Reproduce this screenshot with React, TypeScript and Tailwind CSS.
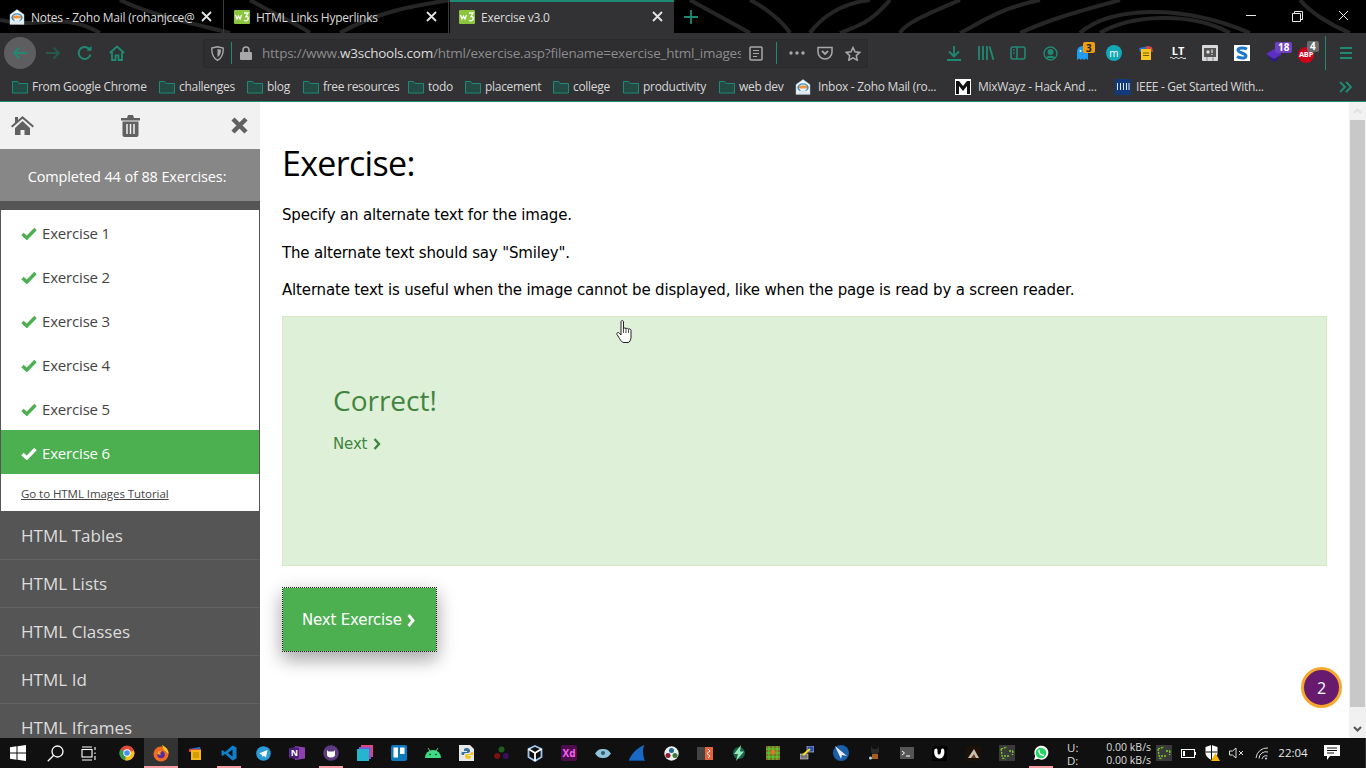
import React from "react";

const TEAL = "#1f8a74";
const UI = { fontFamily: '"Open Sans","Noto Sans",sans-serif' };
const VERD = { fontFamily: '"DejaVu Sans",Verdana,sans-serif' };

function W3() {
  return (
    <svg width="16" height="14" viewBox="0 0 16 14" className="shrink-0">
      <rect width="16" height="14" rx="1" fill="#8cc63f" />
      <path d="M1.500 5l1.500 4 1.500-3 1.500 3 1.500-4" stroke="#fff" strokeWidth="1.200" fill="none" />
      <path d="M10 3h4l-2 3.500c2 0 2.300 1 2.300 2 0 2-2.800 3-4.300 1.700" stroke="#fff" strokeWidth="1.300" fill="none" />
    </svg>
  );
}
function Zoho({ size = 16 }: { size?: number }) {
  return (
    <svg width={size} height={size} viewBox="0 0 16 16" className="shrink-0">
      <path d="M8 .5l7 5v10H1v-10z" fill="#f4f6f8" stroke="#9fb4c4" strokeWidth=".5" />
      <path d="M3 6.500h10v3H3z" fill="#f28c28" opacity=".9" />
      <ellipse cx="8" cy="8.500" rx="5" ry="3.600" fill="none" stroke="#2b8fd0" strokeWidth="1.400" />
      <path d="M1 15l5-4h4l5 4z" fill="#dfe8ee" />
    </svg>
  );
}
function X({ size = 11, color = "#e4e4e4", w = 1.800 }: { size?: number; color?: string; w?: number }) {
  return (
    <svg width={size} height={size} viewBox="0 0 11 11"><path d="M1 1l9 9M10 1l-9 9" stroke={color} strokeWidth={w} /></svg>
  );
}
function Tab({ active, icon, title }: { active?: boolean; icon: React.ReactNode; title: string }) {
  return (
    <div className={active ? "relative flex h-[33px] w-[224px] items-center bg-[#323234] pl-[9px] pr-[11px]" : "relative flex h-[33px] w-[224px] items-center border-r border-[#3a3a3a] pl-[9px] pr-[11px]"}>
      {active && <div className="absolute inset-x-0 top-0 h-[2px] bg-[#1f8a74]" />}
      {icon}
      <span className="ml-[6px] w-[165px] overflow-hidden whitespace-nowrap pt-[2px] text-[12px] tracking-[-0.02em] text-[#dcdcdc]">{title}</span>
      <span className="ml-auto"><X /></span>
    </div>
  );
}
function Folder() {
  return (
    <svg width="16" height="14" viewBox="0 0 16 14" className="shrink-0">
      <path d="M.5 13V1.500h5l1.500 2h8.500V13z" fill="#234a44" stroke="#1f8a74" />
    </svg>
  );
}
function Arrow({ dir, color }: { dir: "l" | "r"; color: string }) {
  return (
    <svg width="16" height="14" viewBox="0 0 16 14">
      {dir === "l" ? <path d="M15 7H2M7.500 1.500L2 7l5.500 5.500" stroke={color} strokeWidth="1.800" fill="none" /> : <path d="M1 7h13M8.500 1.500L14 7l-5.500 5.500" stroke={color} strokeWidth="1.800" fill="none" />}
    </svg>
  );
}

const bookmarks: { label: string; cls: string; text?: string; icon?: React.ReactNode }[] = [
  { label: "From Google Chrome", cls: "w-[147px]" },
  { label: "challenges", cls: "w-[88px]" },
  { label: "blog", cls: "w-[56px]" },
  { label: "free resources", cls: "w-[105px]" },
  { label: "todo", cls: "w-[57px]" },
  { label: "placement", cls: "w-[88px]" },
  { label: "college", cls: "w-[70px]" },
  { label: "productivity", cls: "w-[96px]" },
  { label: "web dev", cls: "w-[76px]" },
  { label: "Inbox - Zoho Mail (ro...", cls: "w-[160px]", text: "ml-[3px]", icon: <Zoho /> },
  {
    label: "MixWayz - Hack And ...", cls: "w-[160px]", text: "ml-[3px]", icon: (
      <svg width="16" height="16" viewBox="0 0 16 16" className="shrink-0"><rect width="16" height="16" fill="#fff" /><path d="M1 2h3l4 5 4-5h3v13h-3V7L8 12 4 7v8H1z" fill="#111" /></svg>
    )
  },
  {
    label: "IEEE - Get Started With...", cls: "w-[160px]", text: "ml-[1px]", icon: (
      <svg width="16" height="16" viewBox="0 0 16 16" className="shrink-0"><rect width="16" height="16" fill="#123a7a" /><path d="M2.500 4v7M5.500 4v7M8.500 4v7M11.500 4v7M14 4v7" stroke="#dfe8ff" strokeWidth="1" /></svg>
    )
  },
];

function Slot({ cls, children }: { cls: string; children: React.ReactNode }) {
  return <div className={`relative flex shrink-0 items-center justify-center ${cls}`}>{children}</div>;
}
function Badge({ text, cls }: { text: string; cls: string }) {
  return <span className={`absolute -top-[3px] left-[17px] flex h-[11px] items-center justify-center rounded-[2px] px-[3px] text-[10px] font-bold leading-none ${cls}`}>{text}</span>;
}

function TitleBar() {
  return (
    <div className="relative flex h-[33px] shrink-0 items-center bg-black">
      <svg className="absolute inset-0" width="1366" height="33" viewBox="0 0 1366 33" fill="none" stroke="#262626" strokeWidth="4">
        <path d="M0 20C40 30 60 10 100 33M120 0C150 15 200 25 230 33M250 0c20 12 50 25 60 33M340 33C380 10 420 5 450 0" />
        <path d="M690 0l60 33M750 0c20 10 35 25 40 33M810 33c10-14 30-30 60-33M840 33c20-8 30-10 50-33M900 33c5-10 30-20 60-33" />
        <path d="M960 33c20-10 40-25 80-33M1020 33c30-14 60-22 100-33M1080 33c30-26 100-30 170 0M1100 33c30-18 90-22 130 0M1300 0c10 12 30 25 50 33" />
      </svg>
      <div className="relative flex">
        <Tab icon={<Zoho />} title="Notes - Zoho Mail (rohanjcce@" />
        <div className="w-px" />
        <Tab icon={<W3 />} title="HTML Links Hyperlinks" />
        <div className="w-px" />
        <Tab active icon={<W3 />} title="Exercise v3.0" />
      </div>
      <svg width="14" height="14" viewBox="0 0 14 14" className="relative ml-[10px]"><path d="M7 0v14M0 7h14" stroke={TEAL} strokeWidth="1.800" /></svg>
      <div className="relative ml-auto flex h-full items-start pt-[10px]">
        <div className="flex w-[46px] justify-center pt-[5px]"><div className="h-px w-[10px] bg-[#e8e8e8]" /></div>
        <div className="flex w-[46px] justify-center">
          <svg width="11" height="11" viewBox="0 0 11 11" className="mt-[1px]" fill="none" stroke="#e8e8e8"><path d="M.5 2.500h8v8h-8zM2.500 2.500v-2h8v8h-2" /></svg>
        </div>
        <div className="flex w-[46px] justify-center">
          <X size={11} color="#e8e8e8" w={1} />
        </div>
      </div>
    </div>
  );
}

function NavBar() {
  return (
    <div className="flex h-[37px] shrink-0 items-center bg-[#323234] pt-[3px]">
      <div className="ml-[4px] flex h-[32px] w-[32px] items-center justify-center rounded-full bg-[#5e5e60]"><Arrow dir="l" color={TEAL} /></div>
      <Slot cls="ml-[1px] w-[32px]"><Arrow dir="r" color="#23594f" /></Slot>
      <Slot cls="w-[32px]">
        <svg width="16" height="16" viewBox="0 0 16 16" fill="none" stroke={TEAL} strokeWidth="2"><path d="M13.500 9.500A6 6 0 1 1 12 3.800" /><path d="M14.500.8v5h-5z" fill={TEAL} stroke="none" /></svg>
      </Slot>
      <Slot cls="w-[32px]">
        <svg width="16" height="16" viewBox="0 0 16 16" fill="none" stroke={TEAL} strokeWidth="1.800"><path d="M.8 8L8 1.500 15.200 8M3 7v8h3.500v-4.500h3V15H13V7" /></svg>
      </Slot>
      <div className="ml-[70px] flex h-[29px] w-[665px] items-center rounded-[2px] border border-[#2a2a2b] bg-[#2e2e30]">
        <Slot cls="w-[27px]">
          <svg width="13" height="15" viewBox="0 0 13 15"><path d="M.8 2L6.500.7 12.200 2c.3 6-1.500 10-5.700 12.300C2.300 12 .5 8 .8 2z" fill="none" stroke="#a8a8a8" strokeWidth="1.400" /><path d="M6.500 3L10 3.800c0 3.500-1 5.800-3.500 7.400z" fill="#a8a8a8" /></svg>
        </Slot>
        <div className="h-[22px] w-px bg-[#1f8a74]" />
        <Slot cls="ml-[6px] w-[16px]">
          <svg width="12" height="14" viewBox="0 0 12 14"><rect y="6" width="12" height="8" rx="1" fill="#a8a8a8" /><path d="M3 6.500V4a3 3 0 0 1 6 0v2.500" fill="none" stroke="#a8a8a8" strokeWidth="1.600" /></svg>
        </Slot>
        <div style={UI} className="ml-[8px] w-[484px] overflow-hidden whitespace-nowrap text-[13.500px] tracking-[-0.018em] text-[#8c8c8c]">
          https://www.<span className="text-[#dcdcdc]">w3schools.com</span>/html/exercise.asp?filename=exercise_html_images6
        </div>
        <Slot cls="ml-[5px] w-[20px]">
          <svg width="14" height="15" viewBox="0 0 14 15" fill="none" stroke="#a8a8a8"><rect x="1" y="1" width="12" height="13" rx="1" strokeWidth="1.500" /><path d="M4 4.500h6M4 7.500h6M4 10.500h4" /></svg>
        </Slot>
        <div className="ml-[10px] h-[22px] w-px bg-[#1f8a74]" />
        <Slot cls="ml-[8px] w-[24px]">
          <svg width="16" height="4" viewBox="0 0 16 4" fill="#a8a8a8"><circle cx="2" cy="2" r="1.700" /><circle cx="8" cy="2" r="1.700" /><circle cx="14" cy="2" r="1.700" /></svg>
        </Slot>
        <Slot cls="ml-[2px] w-[28px]">
          <svg width="16" height="14" viewBox="0 0 16 14" fill="none" stroke="#a8a8a8" strokeWidth="1.500"><path d="M1 1.500h14V6a7 7 0 0 1-14 0z" /><path d="M5 5l3 3 3-3" strokeWidth="1.800" /></svg>
        </Slot>
        <Slot cls="w-[28px]">
          <svg width="16" height="15" viewBox="0 0 16 15" fill="none" stroke="#a8a8a8" strokeWidth="1.500"><path d="M8 1.500l2 4.300 4.700.6-3.400 3.200.9 4.600L8 11.900l-4.200 2.300.9-4.600L1.300 6.400 6 5.800z" /></svg>
        </Slot>
      </div>
      <div className="ml-[70px] flex items-center">
        <Slot cls="w-[32px]">
          <svg width="14" height="15" viewBox="0 0 14 15" fill="none" stroke={TEAL} strokeWidth="1.800"><path d="M7 0v10M2 5.500L7 10.500l5-5M0 14h14" /></svg>
        </Slot>
        <Slot cls="w-[32px]">
          <svg width="16" height="14" viewBox="0 0 16 14" fill="none" stroke={TEAL} strokeWidth="1.800"><path d="M1 0v14M5 0v14M9 0v14M11.500 .5l4 13.500" /></svg>
        </Slot>
        <Slot cls="w-[32px]">
          <svg width="16" height="14" viewBox="0 0 16 14" fill="none" stroke={TEAL} strokeWidth="1.600"><rect x="1" y="1" width="14" height="12" rx="2" /><path d="M7 1v12" /><path d="M3 4h2M3 7h2" strokeWidth="1.200" /></svg>
        </Slot>
        <Slot cls="w-[32px]">
          <svg width="15" height="15" viewBox="0 0 15 15" fill="none" stroke={TEAL} strokeWidth="1.400"><circle cx="7.500" cy="7.500" r="6.500" /><circle cx="7.500" cy="6" r="2.300" fill={TEAL} /><path d="M3.500 12c1-2.200 7-2.200 8 0" fill={TEAL} /></svg>
        </Slot>
        <Slot cls="w-[32px]">
          <svg width="13" height="16" viewBox="0 0 13 16"><path d="M1 15V6.500a5.500 5.500 0 0 1 11 0V15l-2-1.500-2 1.500-1.500-1.500L5 15l-2-1.500z" fill="#1f9cf0" /><circle cx="4.500" cy="6" r="1" fill="#fff" /><circle cx="8.500" cy="6" r="1" fill="#fff" /></svg>
          <Badge text="3" cls="bg-[#f29d0c] text-[#222]" />
        </Slot>
        <Slot cls="w-[32px]">
          <div style={UI} className="flex h-[16px] w-[16px] items-center justify-center rounded-full bg-[#12a8b5] pb-[1px] text-[10px] leading-none text-white">m</div>
        </Slot>
        <Slot cls="w-[32px]">
          <svg width="16" height="16" viewBox="0 0 16 16"><path d="M1 3l11-2 1 4-11 2z" fill="#2b6fd6" /><path d="M8 1l6 1 1 5-7-1z" fill="#d9453b" /><rect x="3" y="4" width="10" height="11" fill="#f9c623" /><path d="M5 8h6M5 10.500h6" stroke="#7a5a00" /></svg>
        </Slot>
        <Slot cls="w-[32px]">
          <div className="relative flex h-[16px] w-[16px] flex-col items-center text-white">
            <span style={UI} className="text-[11px] font-bold leading-[11px]">LT</span>
            <svg width="16" height="4" viewBox="0 0 16 4" fill="none" stroke="#fff"><path d="M0 2c2-2 3 2 5 0s3 2 5 0 3 2 6 0" /></svg>
          </div>
        </Slot>
        <Slot cls="w-[32px]">
          <svg width="16" height="16" viewBox="0 0 16 16"><rect width="16" height="16" rx="1" fill="#d8d8d8" /><rect x="2" y="3" width="12" height="9" fill="#555" /><path d="M5 12v4M11 12v4" stroke="#888" /><circle cx="6" cy="7" r="1.700" fill="#ddd" /><path d="M10 4.500v3.500M10 9v1" stroke="#ddd" strokeWidth="1.300" /></svg>
        </Slot>
        <Slot cls="w-[32px]">
          <svg width="16" height="16" viewBox="0 0 16 16"><rect width="16" height="16" fill="#fff" /><path d="M13 4c-2-1-9-2-9 1s8 3 8 6-7 2-9 .5" stroke="#1d77c9" strokeWidth="3" fill="none" /></svg>
        </Slot>
        <Slot cls="w-[32px]">
          <svg width="16" height="13" viewBox="0 0 16 13" className="mt-[4px]"><path d="M8 0l8 5-8 5-8-5z" fill="#5a2fc2" /><path d="M0 7l8 6 8-6-8 3z" fill="#2a1a8c" /></svg>
          <Badge text="18" cls="bg-[#6f42c1] text-white" />
        </Slot>
        <Slot cls="w-[32px]">
          <div style={UI} className="mt-[3px] flex h-[16px] w-[16px] items-center justify-center rounded-full bg-[#d0021b] text-[7.500px] font-bold tracking-[-0.03em] text-white">ABP</div>
          <Badge text="4" cls="bg-[#6b6b6b] text-white" />
        </Slot>
        <div className="ml-[3px] h-[34px] w-px bg-[#1f8a74]" />
        <Slot cls="ml-[4px] w-[32px]">
          <svg width="12" height="12" viewBox="0 0 12 12" stroke={TEAL} strokeWidth="1.800"><path d="M0 1h12M0 6h12M0 11h12" /></svg>
        </Slot>
      </div>
    </div>
  );
}

function BookmarksBar() {
  return (
    <div style={UI} className="flex h-[32px] shrink-0 items-center border-b-[1px] border-[#1f8a74] bg-[#323234] pl-[12px] pt-[2px] text-[12px] tracking-[-0.025em] text-[#d8d8d8]">
      {bookmarks.map((b) => (
        <div key={b.label} className={`flex shrink-0 items-center gap-[4px] whitespace-nowrap ${b.cls}`}>
          {b.icon ?? <Folder />}
          <span className={b.text ?? ""}>{b.label}</span>
        </div>
      ))}
      <svg width="14" height="12" viewBox="0 0 14 12" fill="none" stroke={TEAL} strokeWidth="2" className="ml-auto mr-[13px]"><path d="M1 1l5 5-5 5M7 1l5 5-5 5" /></svg>
    </div>
  );
}

function Check({ color }: { color: string }) {
  return (
    <svg width="16" height="13" viewBox="0 0 16 13"><path d="M1.500 7L5.800 11 14.500 2" stroke={color} strokeWidth="3.400" fill="none" /></svg>
  );
}

function Sidebar() {
  return (
    <aside style={UI} className="flex w-[260px] shrink-0 flex-col overflow-hidden bg-[#555555]">
      <div className="flex h-[47px] shrink-0 items-center justify-between bg-[#f1f1f1] pl-[11px] pr-[12px]">
        <svg width="23" height="19" viewBox="0 0 23 19" fill="#616161"><path d="M11.500 0L23 10l-1.300 1.400L11.500 2.800 1.300 11.400 0 10l4-3.500V1h3v3z" /><path d="M4 12l7.500-7 7.500 7v7h-5.500v-5h-4v5H4z" /></svg>
        <svg width="19" height="22" viewBox="0 0 19 22" fill="#616161" className="mr-[5px]"><path d="M0 3h6l1-3h5l1 3h6v2.500H0zM1.500 6.500h16V20a2 2 0 0 1-2 2h-12a2 2 0 0 1-2-2z" /><path d="M6 9v10M9.500 9v10M13 9v10" stroke="#f1f1f1" strokeWidth="1.500" /></svg>
        <svg width="17" height="17" viewBox="0 0 17 17"><path d="M2 2l13 13M15 2L2 15" stroke="#616161" strokeWidth="4.500" /></svg>
      </div>
      <div className="flex h-[52px] shrink-0 items-center justify-center bg-[#878787] pr-[6px] pt-[4px] text-[14.500px] tracking-[-0.008em] text-white">Completed 44 of 88 Exercises:</div>
      <div className="mt-[9px] flex shrink-0 flex-col border-b border-x border-[#555555] bg-white">
        {[1, 2, 3, 4, 5, 6].map((n) => (
          <div key={n} className={n === 6 ? "flex h-[44px] items-center gap-[5px] bg-[#4caf50] pl-[20px] pt-[2px] text-[15px] tracking-[-0.012em] text-white" : "flex h-[44px] items-center gap-[5px] pl-[20px] pt-[2px] text-[15px] tracking-[-0.012em] text-[#444444]"}>
            <Check color={n === 6 ? "#ffffff" : "#4caf50"} />
            Exercise {n}
          </div>
        ))}
        <div className="flex h-[37px] items-center pl-[20px] pt-[3px] text-[11.500px] tracking-[-0.005em] text-[#444444] underline">Go to HTML Images Tutorial</div>
      </div>
      {["HTML Tables", "HTML Lists", "HTML Classes", "HTML Id", "HTML Iframes"].map((t) => (
        <div key={t} className="flex h-[48px] shrink-0 items-center border-b border-[#626262] pl-[21px] text-[17px] tracking-[0.002em] text-[#dddddd]">{t}</div>
      ))}
    </aside>
  );
}

function Main() {
  return (
    <main className="relative min-w-0 flex-1 overflow-hidden bg-white pl-[22px] pr-[22px] text-[15px] text-black">
      <h1 style={UI} className="mt-[37px] text-[34px] font-normal leading-[48px] tracking-[-0.02em]">Exercise:</h1>
      <div style={VERD} className="tracking-[-0.011em]">
        <p className="mt-[17px] leading-[22px]">Specify an alternate text for the image.</p>
        <p className="mt-[15.500px] leading-[22px]">The alternate text should say "Smiley".</p>
        <p className="mt-[15.500px] leading-[22px]">Alternate text is useful when the image cannot be displayed, like when the page is read by a screen reader.</p>
      </div>
      <section className="mt-[15px] flex h-[250px] flex-col border border-[#d6e9c6] bg-[#dff0d8] pl-[50px] pt-[64px] text-[#3f8540]">
        <div style={UI} className="text-[28px] leading-[38px]">Correct!</div>
        <div style={VERD} className="mt-[15px] flex items-center gap-[6px] text-[15px] leading-[20px] tracking-[-0.01em]">
          Next
          <svg width="8" height="12" viewBox="0 0 8 12" fill="none" stroke="#3f8540" strokeWidth="2.400"><path d="M1.500 1l4.500 5-4.500 5" /></svg>
        </div>
      </section>
      <button style={VERD} className="mt-[21px] flex h-[65px] w-[155px] items-center gap-[5px] border border-dotted border-[#222222] bg-[#4caf50] bg-clip-padding pl-[19px] pt-[2px] text-[15px] tracking-[-0.012em] text-white shadow-[0_8px_16px_0_rgba(0,0,0,0.2),0_6px_20px_0_rgba(0,0,0,0.19)]">
        Next Exercise
        <svg width="8" height="13" viewBox="0 0 8 13" fill="none" stroke="#fff" strokeWidth="2.800"><path d="M1.500 1l4.500 5.500-4.500 5.500" /></svg>
      </button>
      <div style={UI} className="absolute left-[1041px] top-[565px] flex h-[41px] w-[41px] items-center justify-center rounded-full border-[3px] border-[#f5a82c] bg-[#681a6e] text-[16px] text-white">2</div>
      <svg width="18" height="24" viewBox="0 0 18 24" className="absolute left-[356px] top-[218px]">
        <path d="M5 2c0-2 2.500-2 2.500 0v7c0-1.500 2.500-1.500 2.500 0 0-1 2.500-1 2.500.5 0-1 2.500-.8 2.500 1V17c0 3-1.500 5.500-3 5.500H8C6 22.500 5 21 3.500 18.500L1 14.500c-.8-1.500 1-2.800 2.200-1.500L5 15z" fill="#fff" stroke="#222" strokeWidth="1" />
        <path d="M7.500 9v4M10 9v4M12.500 10v3" stroke="#222" strokeWidth=".8" />
      </svg>
    </main>
  );
}

function Scrollbar() {
  return (
    <div className="flex w-[17px] shrink-0 flex-col items-center bg-[#f1f1f1]">
      <div className="flex h-[18px] items-center justify-center">
        <svg width="9" height="6" viewBox="0 0 9 6" fill="none" stroke="#e0e0e0" strokeWidth="2"><path d="M1 5l3.500-3.500L8 5" /></svg>
      </div>
      <div className="w-[15px] flex-1 bg-[#c8c8c8]" />
      <div className="flex h-[31px] items-end justify-center pb-[6px]">
        <svg width="9" height="6" viewBox="0 0 9 6" fill="none" stroke="#555" strokeWidth="2"><path d="M1 1l3.500 3.500L8 1" /></svg>
      </div>
    </div>
  );
}

const T = ({ children, on, act }: { children: React.ReactNode; on?: boolean; act?: boolean }) => (
  <div className={act ? "relative flex h-[30px] w-[34px] shrink-0 items-center justify-center bg-[#333333]" : "relative flex h-[30px] w-[34px] shrink-0 items-center justify-center"}>
    {children}
    {on && <div className="absolute bottom-0 left-[5px] right-[5px] h-[2px] bg-[#f59ca3]" />}
    {act && <div className="absolute bottom-0 left-0 right-0 h-[2px] bg-[#f59ca3]" />}
  </div>
);

function Taskbar() {
  return (
    <div style={UI} className="flex h-[30px] shrink-0 items-center bg-[#101010] pl-[1px] text-white">
      <T><svg width="16" height="16" viewBox="0 0 16 16" fill="#fff"><path d="M0 2.300l6.500-1v6.200H0zM7.500 1.200L16 0v7.500H7.500zM0 8.500h6.500v6.200l-6.500-1zM7.500 8.500H16V16l-8.500-1.200z" /></svg></T>
      <div className="w-[3px]" />
      <T><svg width="17" height="17" viewBox="0 0 17 17" fill="none" stroke="#fff" strokeWidth="1.300"><circle cx="10.500" cy="6.500" r="5.500" /><path d="M6.500 10.500L.8 16.200" /></svg></T>
      <T><svg width="16" height="15" viewBox="0 0 16 15" fill="none" stroke="#fff" strokeWidth="1.100"><rect x="1" y="3.500" width="10" height="7.500" /><path d="M1 1h10M1 14h10M14 1v3M14 6.500v1.500M14 10v4" /></svg></T>
      <div className="w-[4px]" />
      <T><svg width="16" height="16" viewBox="0 0 16 16"><circle cx="8" cy="8" r="7.500" fill="#dd4b3e" /><path d="M8 8L1.300 4.500A7.500 7.500 0 0 0 6 15.300z" fill="#2e9e4e" /><path d="M8 8l6.900-2.500a7.500 7.500 0 0 1-8.900 9.800z" fill="#f7c21a" /><circle cx="8" cy="8" r="3.700" fill="#fff" /><circle cx="8" cy="8" r="2.800" fill="#4a8ef0" /></svg></T>
      <T act><svg width="16" height="17" viewBox="0 0 16 17"><circle cx="8" cy="9" r="7.500" fill="#f36b21" /><path d="M9 0c4 2 7 5 6.500 9L11 5z" fill="#fcc52d" /><circle cx="8" cy="9.500" r="3.800" fill="#5b2a9d" /><path d="M4 9c0-3 3-4 6-3-3 0-3 3-2 4-2 0-3-1-4-1z" fill="#f9a21c" /></svg></T>
      <T><svg width="15" height="15" viewBox="0 0 15 15"><path d="M1 3l11-2 1 4H2z" fill="#2b6fd6" /><path d="M1 3h12v3H1z" fill="#d9453b" /><rect x="3" y="4" width="10" height="10" fill="#f4b918" /><rect x="5" y="6" width="6" height="6" fill="#d69a09" /></svg></T>
      <T on><svg width="16" height="16" viewBox="0 0 16 16" fill="none"><path d="M11.500.5L15.500 2.500v11l-4 2L4 9 1.500 11 .5 10V6l1-1L4 7z" fill="#0f7fcb" /><path d="M11.500 4.500L7 8l4.500 3.500z" fill="#101010" /></svg></T>
      <T><svg width="15" height="15" viewBox="0 0 15 15"><circle cx="7.500" cy="7.500" r="7.300" fill="#2a9bd7" /><path d="M3 7.500L11.500 4 10 11.500 7.700 9.700 6.500 11 6 8.800z" fill="#fff" /></svg></T>
      <T>
        <svg width="16" height="16" viewBox="0 0 16 16"><path d="M6 1l10 1.500v11L6 15z" fill="#8e3fb0" /><path d="M0 3.500l9-2v13l-9-2z" fill="#6a2c91" /><rect x="1" y="3" width="9" height="10" fill="#4b1e78" /><text x="5.500" y="11" textAnchor="middle" fontSize="9" fontWeight="bold" fill="#fff">N</text></svg>
      </T>
      <T on><svg width="16" height="16" viewBox="0 0 16 16"><circle cx="8" cy="8" r="7.800" fill="#5d3a80" /><path d="M4 5l1.500 1.500h5L12 5v5c0 1.500-1.500 2.500-4 2.500S4 11.500 4 10z" fill="#fff" /></svg></T>
      <T><svg width="16" height="16" viewBox="0 0 16 16"><rect x="4" y="0" width="12" height="12" fill="#e0457b" /><rect x="2" y="2" width="12" height="12" fill="#7a5cd6" /><rect y="4" width="12" height="12" fill="#26b5cf" /></svg></T>
      <T><svg width="16" height="16" viewBox="0 0 16 16"><rect width="16" height="16" rx="2" fill="#0d79bf" /><rect x="2.500" y="2.500" width="4.500" height="10" fill="#fff" /><rect x="9" y="2.500" width="4.500" height="6.500" fill="#fff" /></svg></T>
      <T><svg width="16" height="10" viewBox="0 0 16 10"><path d="M0 10a8 8 0 0 1 16 0z" fill="#3ddc84" /><path d="M3 0l2 3M13 0l-2 3" stroke="#3ddc84" /><circle cx="5" cy="6.500" r=".8" fill="#101010" /><circle cx="11" cy="6.500" r=".8" fill="#101010" /></svg></T>
      <T><svg width="16" height="16" viewBox="0 0 16 16"><path d="M0 0h11l4 4v12H0z" fill="#e8e8e8" /><path d="M8 3c-3 0-3 1-3 3h3v1H3.500C2 7 2 10 3.500 10H5c0-2 1-2 3-2s3-.5 3-2-1-3-3-3z" fill="#3572a5" /><path d="M9 14c3 0 3-1 3-3H9v-1h4.500c1.500 0 1.500-3 0-3H12c0 2-1 2-3 2s-3 .5-3 2 1 3 3 3z" fill="#f5c518" /></svg></T>
      <T><svg width="15" height="14" viewBox="0 0 15 14"><circle cx="7.500" cy="3.500" r="3" fill="#1c5e20" /><circle cx="3.200" cy="10" r="3" fill="#7a1010" /><circle cx="11.800" cy="10" r="3" fill="#3c1060" /></svg></T>
      <T><svg width="16" height="17" viewBox="0 0 16 17" fill="none" stroke="#9ec6ec" strokeWidth="1.800"><path d="M8 1l6.500 3v8L8 16l-6.500-4V4z" /><path d="M1.500 4L8 8l6.500-4M8 8v8" stroke="#fff" /></svg></T>
      <T><div className="flex h-[16px] w-[16px] items-center justify-center rounded-[2px] bg-[#4d0d4c] text-[10px] font-bold leading-none text-[#ff61f6]">Xd</div></T>
      <T><svg width="16" height="9" viewBox="0 0 16 9"><path d="M0 4.500C3 .5 5 0 8 0s5 .5 8 4.500C13 8.500 11 9 8 9s-5-.5-8-4.500z" fill="#8fc3dc" /><circle cx="8" cy="4" r="2" fill="#33596e" /></svg></T>
      <T><svg width="16" height="16" viewBox="0 0 16 16"><path d="M0 15C2 10 7 3 15.500 0c-2 4-2 8 0 15z" fill="#1769c4" /><path d="M0 15h16v1H0z" fill="#0a4a96" /></svg></T>
      <T><svg width="15" height="15" viewBox="0 0 15 15"><circle cx="7.500" cy="7.500" r="7.200" fill="#eee" /><circle cx="7.500" cy="4.500" r="2.500" fill="#1a6a9a" /><circle cx="4" cy="9.500" r="2.500" fill="#8a1f2b" /><circle cx="11" cy="9.500" r="2.500" fill="#3b7a3b" /></svg></T>
      <T><svg width="16" height="13" viewBox="0 0 16 13"><rect width="8" height="13" fill="#444" /><rect x="8" width="8" height="13" fill="#e8633a" /><path d="M11 2l2 2-3 2.500 3 2.500-2 2" stroke="#fff" fill="none" /></svg></T>
      <T><svg width="16" height="16" viewBox="0 0 16 16"><circle cx="8" cy="8" r="6" fill="#1d5e4c" /><path d="M10 0L3 9h4l-2 7 8-9.500H9z" fill="#8fe9b3" /></svg></T>
      <T><svg width="14" height="14" viewBox="0 0 14 14"><rect width="14" height="14" fill="#8c6a1f" /><path d="M0 3h14M0 7h14M0 11h14M3 0v14M7 0v14M11 0v14" stroke="#3ce03c" /><circle cx="7" cy="6" r="2.500" fill="#d9782a" /></svg></T>
      <T><svg width="14" height="15" viewBox="0 0 14 15"><rect x="7" y="0" width="7" height="6" fill="#2a4bb0" stroke="#ddd" strokeWidth=".6" /><rect x="0" y="8" width="8" height="5" fill="#777" stroke="#ddd" strokeWidth=".6" /><path d="M3 9l7-6" stroke="#f2e21b" strokeWidth="2" /></svg></T>
      <T><svg width="16" height="16" viewBox="0 0 16 16"><circle cx="8" cy="8" r="8" fill="#1b5fa8" /><path d="M2 1l12 10-5-1-1 4z" fill="#eef" /></svg></T>
      <T><svg width="12" height="16" viewBox="0 0 12 16"><path d="M2 1l2 3h4l2-3v6L6 12 2 7z" fill="#2a2a2a" /><path d="M3 9h6v5H3z" fill="#a65d1f" /><circle cx="1.500" cy="13" r="1.500" fill="#a9dcf0" /></svg></T>
      <div className="flex h-[30px] w-[30px] shrink-0 items-center justify-center"><div className="flex h-[12px] w-[14px] items-center bg-[#555] pl-[2px]"><svg width="8" height="7" viewBox="0 0 8 7" fill="none" stroke="#fff"><path d="M0 1l2.500 2L0 5M4 6h4" /></svg></div></div>
      <div className="flex h-[30px] w-[34px] shrink-0 items-center justify-center"><svg width="15" height="15" viewBox="0 0 15 15"><rect width="15" height="15" fill="#000" /><path d="M2.500 3.500c2-2 3-1 3 1s0 4 1.500 4 2-2 2-4 2-3 3-1 .5 9-4.500 9-6-6-5-9z" fill="#fff" /></svg></div>
      <T><svg width="15" height="15" viewBox="0 0 15 15"><rect width="15" height="15" fill="#1a1208" /><path d="M2 12l6-9 5 9z" fill="#c9c0b5" /><path d="M5 12l3-4 2 4z" fill="#6a3b1f" /></svg></T>
      <T><svg width="16" height="16" viewBox="0 0 16 16"><rect width="16" height="16" fill="#3a3a3a" /><path d="M2 4l6-2M2 4l1.500 9 3 1M10 6h4M14 6l-.5 4M5 11h5" stroke="#7ed321" strokeWidth="1.300" fill="none" strokeDasharray="2 1" /></svg></T>
      <T on><svg width="16" height="16" viewBox="0 0 16 16"><path d="M1 15l1.200-4a7 7 0 1 1 2.800 2.800z" fill="#fff" /><circle cx="8" cy="8" r="5.300" fill="#25d366" /><path d="M5.500 5c1-1 1.500 1 1.200 1.600S8 9.500 9.800 9.600c.7-.6 2 .5 1.300 1.100-1.500 1-6.600-1.200-5.600-5.700z" fill="#fff" /></svg></T>
      <div className="ml-[9px] flex w-[24px] shrink-0 flex-col pt-[1px] text-[11.500px] leading-[13px] text-[#dddddd]"><span>U:</span><span>D:</span></div>
      <div className="flex w-[60px] shrink-0 flex-col items-end whitespace-nowrap pt-[1px] text-[10.500px] leading-[13px] text-[#dddddd]"><span>0.00 kB/s</span><span>0.00 kB/s</span></div>
      <Slot cls="ml-[5px] w-[16px]"><svg width="16" height="16" viewBox="0 0 16 16"><rect width="16" height="16" fill="#3a3a3a" /><path d="M2 4l6-2M2 4l1.500 9 3 1M10 6h4M14 6l-.5 4M5 11h5" stroke="#7ed321" strokeWidth="1.300" fill="none" strokeDasharray="2 1" /></svg></Slot>
      <Slot cls="ml-[9px] w-[15px]"><svg width="15" height="9" viewBox="0 0 15 9" fill="none" stroke="#fff"><rect x=".5" y=".5" width="13" height="8" /><path d="M14.500 3v3" /><rect x="2" y="2" width="2" height="5" fill="#fff" stroke="none" /></svg></Slot>
      <Slot cls="ml-[9px] w-[15px]"><svg width="15" height="16" viewBox="0 0 15 16"><path d="M.5 2L6.500 0l6 2v6c0 3-3 5.500-6 7-3-1.500-6-4-6-7z" fill="#fff" /><path d="M.5 7h12M6.500 0v15" stroke="#101010" /><path d="M10.500 8l4.500 8H6z" fill="#f7b500" /></svg></Slot>
      <Slot cls="ml-[8px] w-[16px]"><svg width="15" height="12" viewBox="0 0 15 12" fill="none" stroke="#ddd"><path d="M.5 4h3l3.500-3v10L3.500 8h-3z" /><path d="M10 4l4 4M14 4l-4 4" /></svg></Slot>
      <Slot cls="ml-[11px] w-[14px]"><svg width="14" height="13" viewBox="0 0 14 13" fill="none" stroke="#ddd"><path d="M1 11A11 11 0 0 1 13 1M4 11.500A7 7 0 0 1 13 5M7 12A4 4 0 0 1 12.500 9" /><circle cx="11" cy="11.500" r="1" fill="#ddd" stroke="none" /></svg></Slot>
      <div className="ml-[3px] w-[42px] shrink-0 text-center text-[11.500px] text-[#e8e8e8]">22:04</div>
      <Slot cls="ml-[10px] w-[17px]"><svg width="17" height="16" viewBox="0 0 17 16"><path d="M0 0h16v11H6l-3 4v-4H0z" fill="#fff" /><path d="M3 3h10M3 5.500h10M3 8h7" stroke="#101010" /></svg></Slot>
      <div className="ml-auto h-full w-px bg-[#333]" />
    </div>
  );
}

export default function App() {
  return (
    <div className="flex h-[768px] w-[1366px] flex-col overflow-hidden bg-black">
      <div style={UI}><TitleBar /></div>
      <NavBar />
      <BookmarksBar />
      <div className="flex min-h-0 flex-1">
        <Sidebar />
        <Main />
        <Scrollbar />
      </div>
      <Taskbar />
    </div>
  );
}
